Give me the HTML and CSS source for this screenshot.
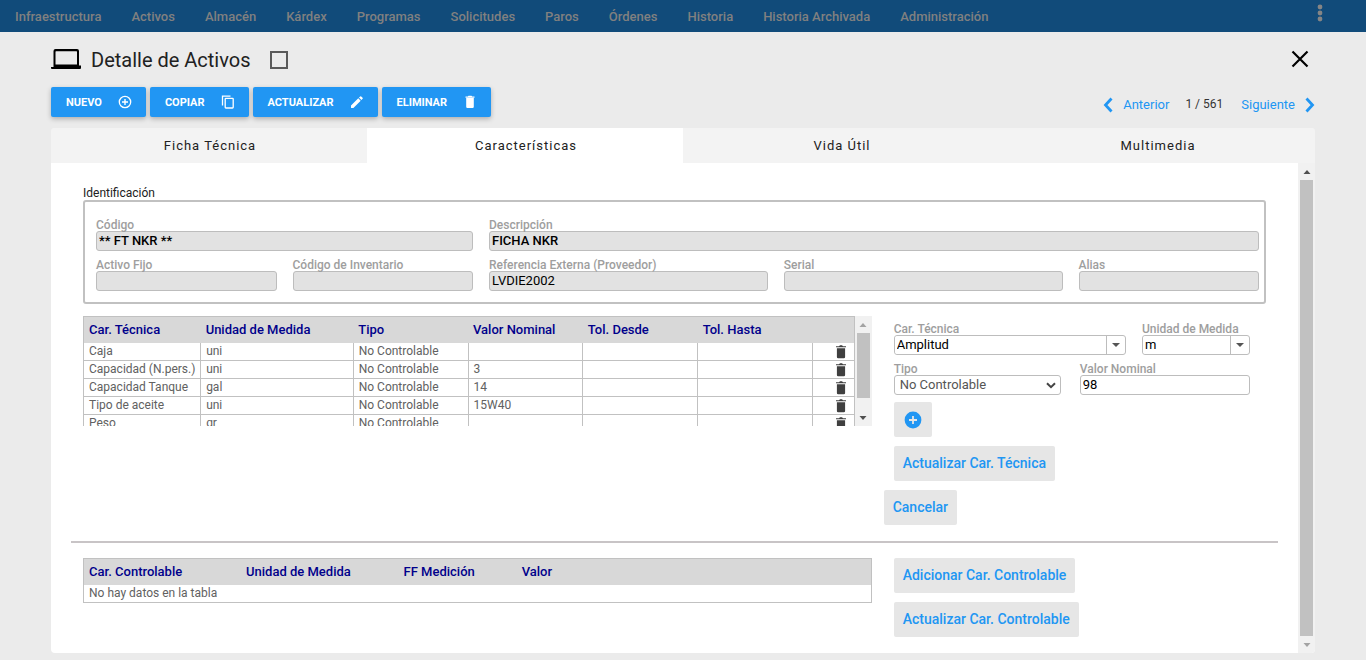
FILE: index.html
```html
<!DOCTYPE html>
<html lang="es">
<head>
<meta charset="utf-8">
<title>Detalle de Activos</title>
<link rel="stylesheet" href="styles.css">
</head>
<body>
<svg class="defs" aria-hidden="true">
  <symbol id="trash" viewBox="0 0 12 14"><path d="M1 1.2h3L5 .2h2l1 1h3v1.1H1zM1.9 3.2h8.2V12q0 1.3-1.3 1.3H3.2Q1.900 13.300 1.900 12z"/></symbol>
  <symbol id="up" viewBox="0 0 7 4"><path d="M0 4 3.500 0 7 4z"/></symbol>
  <symbol id="down" viewBox="0 0 7 4"><path d="M0 0h7L3.500 4z"/></symbol>
</svg>

<nav class="topbar">
  <div class="menu">
    <a href="#">Infraestructura</a><a href="#">Activos</a><a href="#">Almacén</a><a href="#">Kárdex</a><a href="#">Programas</a><a href="#">Solicitudes</a><a href="#">Paros</a><a href="#">Órdenes</a><a href="#">Historia</a><a href="#">Historia Archivada</a><a href="#">Administración</a>
  </div>
  <button class="more" aria-label="Más opciones">
    <svg width="6" height="18" viewBox="0 0 6 18"><circle cx="3" cy="3" r="2.400"/><circle cx="3" cy="9" r="2.400"/><circle cx="3" cy="15" r="2.400"/></svg>
  </button>
</nav>

<main class="dialog">
  <header class="title-row">
    <svg class="laptop" width="30" height="22" viewBox="0 0 30 22"><path d="M4.500 0h21.500q2 0 2 2v14.500h2V19q0 1-1 1H1q-1 0-1-1v-1h2.500V2q0-2 2-2zM5 2.200q-.5 0-.5.5V15.500H26V2.700q0-.5-.5-.5z" fill-rule="evenodd"/></svg>
    <h1>Detalle de Activos</h1>
    <input type="checkbox" class="tick" aria-label="Seleccionar activo">
    <button class="close" aria-label="Cerrar">
      <svg width="18" height="18" viewBox="0 0 18 18"><path d="M1.500 1.500l15 15M16.500 1.500l-15 15" fill="none" stroke="#000" stroke-width="2.200"/></svg>
    </button>
  </header>

  <div class="toolbar">
    <div class="actions">
      <button>NUEVO <svg viewBox="0 0 14 14"><circle cx="7" cy="7" r="5.700" fill="none" stroke="#fff" stroke-width="1.300"/><path d="M6.300 4h1.400v2.300H10v1.400H7.700V10H6.300V7.700H4V6.300h2.300z"/></svg></button>
      <button>COPIAR <svg viewBox="0 0 14 14"><path d="M1.500 10.500V1.100H9.500" fill="none" stroke="#fff" stroke-width="1.300"/><rect x="4.200" y="3.400" width="8" height="9.600" rx=".7" fill="none" stroke="#fff" stroke-width="1.300"/></svg></button>
      <button>ACTUALIZAR <svg viewBox="0 0 14 14"><path d="M1 10.600 8.300 3.300l2.400 2.400L3.400 13H1zM9 2.600l1.200-1.200q.5-.4 1 0l1.400 1.400q.5.500 0 1L11.400 5z"/></svg></button>
      <button>ELIMINAR <svg viewBox="0 0 14 14"><path d="M2.500 1.500h2.300l.7-.7h3l.7.700h2.300v1.300h-9zM3.200 3h7.600v8.800q0 1.200-1.200 1.200H4.400q-1.200 0-1.200-1.200z"/></svg></button>
    </div>
    <div class="pager">
      <button><svg width="10" height="16" viewBox="0 0 10 16"><path d="M8.500 1.500 2.500 8l6 6.500" fill="none" stroke="#2196f3" stroke-width="2.800"/></svg>Anterior</button>
      <span>1 / 561</span>
      <button>Siguiente<svg width="10" height="16" viewBox="0 0 10 16"><path d="M1.500 1.500 7.500 8l-6 6.500" fill="none" stroke="#2196f3" stroke-width="2.800"/></svg></button>
    </div>
  </div>

  <div class="tabs" role="tablist">
    <button role="tab">Ficha Técnica</button>
    <button role="tab" class="active" aria-selected="true">Características</button>
    <button role="tab">Vida Útil</button>
    <button role="tab">Multimedia</button>
  </div>

  <section class="panel">
    <div class="content">
      <div class="ident">
        <h2>Identificación</h2>
        <div class="fields">
          <div class="field w4"><label for="codigo">Código</label><input id="codigo" class="strong" value="** FT NKR **" readonly></div>
          <div class="field w8"><label for="desc">Descripción</label><input id="desc" class="strong" value="FICHA NKR" readonly></div>
          <div class="field w2"><label for="fijo">Activo Fijo</label><input id="fijo" readonly></div>
          <div class="field w2"><label for="inv">Código de Inventario</label><input id="inv" readonly></div>
          <div class="field w3"><label for="ref">Referencia Externa (Proveedor)</label><input id="ref" value="LVDIE2002" readonly></div>
          <div class="field w3"><label for="serial">Serial</label><input id="serial" readonly></div>
          <div class="field w2"><label for="alias">Alias</label><input id="alias" readonly></div>
        </div>
      </div>

      <div class="split">
        <div class="scroller">
          <table class="grid technical">
            <colgroup><col class="c-name"><col class="c-unit"><col class="c-val"><col class="c-val"><col class="c-val"><col class="c-val"><col></colgroup>
            <thead><tr><th>Car. Técnica</th><th>Unidad de Medida</th><th>Tipo</th><th>Valor Nominal</th><th>Tol. Desde</th><th>Tol. Hasta</th><th></th></tr></thead>
            <tbody>
              <tr><td>Caja</td><td>uni</td><td>No Controlable</td><td></td><td></td><td></td><td><button aria-label="Eliminar"><svg><use href="#trash"/></svg></button></td></tr>
              <tr><td>Capacidad (N.pers.)</td><td>uni</td><td>No Controlable</td><td>3</td><td></td><td></td><td><button aria-label="Eliminar"><svg><use href="#trash"/></svg></button></td></tr>
              <tr><td>Capacidad Tanque</td><td>gal</td><td>No Controlable</td><td>14</td><td></td><td></td><td><button aria-label="Eliminar"><svg><use href="#trash"/></svg></button></td></tr>
              <tr><td>Tipo de aceite</td><td>uni</td><td>No Controlable</td><td>15W40</td><td></td><td></td><td><button aria-label="Eliminar"><svg><use href="#trash"/></svg></button></td></tr>
              <tr><td>Peso</td><td>gr</td><td>No Controlable</td><td></td><td></td><td></td><td><button aria-label="Eliminar"><svg><use href="#trash"/></svg></button></td></tr>
            </tbody>
          </table>
          <div class="bar at-top">
            <i><svg><use href="#up"/></svg></i><b></b><i><svg><use href="#down"/></svg></i>
          </div>
        </div>
        <div class="side">
          <div class="pair first">
            <div class="field"><label for="car">Car. Técnica</label><div class="combo"><input id="car" value="Amplitud"><button aria-label="Abrir lista"><svg viewBox="0 0 8 4"><path d="M0 0h8L4 4z"/></svg></button></div></div>
            <div class="field"><label for="um">Unidad de Medida</label><div class="combo"><input id="um" value="m"><button aria-label="Abrir lista"><svg viewBox="0 0 8 4"><path d="M0 0h8L4 4z"/></svg></button></div></div>
          </div>
          <div class="pair second">
            <div class="field"><label for="tipo">Tipo</label><div class="select"><select id="tipo"><option>No Controlable</option></select><svg width="10" height="7" viewBox="0 0 10 7"><path d="M1 1.200l4 4 4-4" fill="none" stroke="#444" stroke-width="2"/></svg></div></div>
            <div class="field"><label for="nominal">Valor Nominal</label><input id="nominal" value="98"></div>
          </div>
          <div class="stack">
            <button class="flat add" aria-label="Adicionar"><svg width="18" height="18" viewBox="0 0 18 18"><circle cx="9" cy="9" r="8.400" fill="#2196f3"/><path d="M8.100 5h1.800v3.100H13v1.800H9.900V13H8.100V9.900H5V8.100h3.100z" fill="#e6e6e6"/></svg></button>
            <button class="flat">Actualizar Car. Técnica</button>
            <button class="flat cancel">Cancelar</button>
          </div>
        </div>
      </div>

      <hr>

      <div class="split">
        <div>
          <table class="grid control">
            <colgroup><col class="k-wide"><col class="k-wide"><col class="k-mid"><col></colgroup>
            <thead><tr><th>Car. Controlable</th><th>Unidad de Medida</th><th>FF Medición</th><th>Valor</th></tr></thead>
            <tbody><tr><td colspan="4">No hay datos en la tabla</td></tr></tbody>
          </table>
        </div>
        <div class="side">
          <div class="stack">
            <button class="flat">Adicionar Car. Controlable</button>
            <button class="flat">Actualizar Car. Controlable</button>
          </div>
        </div>
      </div>
    </div>
    <div class="bar at-end">
      <i><svg><use href="#up"/></svg></i><b></b><i><svg><use href="#down"/></svg></i>
    </div>
  </section>
</main>
</body>
</html>
```

FILE: styles.css
```css
* { box-sizing: border-box; }
body {
  margin: 0;
  min-height: 100vh;
  display: flex;
  flex-direction: column;
  background: #ebebeb;
  color: #212121;
  font-family: Roboto, "Liberation Sans", sans-serif;
  font-size: 12px;
}
button, input, select { font: inherit; margin: 0; }
button { border: 0; padding: 0; background: none; cursor: pointer; }
svg { display: block; flex: none; }
.defs { position: absolute; width: 0; height: 0; }

.topbar {
  display: flex;
  justify-content: space-between;
  height: 32px;
  padding-right: 43px;
  background: #114b7a;
}
.menu { display: flex; align-items: center; }
.menu a {
  padding: 0 15px;
  color: #808080;
  font-size: 13px;
  font-weight: 500;
  text-decoration: none;
}
.more { padding-bottom: 6px; }
.more svg { fill: #858585; }

.dialog {
  flex: 1;
  display: flex;
  flex-direction: column;
  padding: 11px 51px 7px;
}
.title-row { display: flex; align-items: center; height: 34px; }
h1 { margin: 0 20px 0 10px; font-size: 20px; font-weight: 400; color: #212121; }
.tick {
  appearance: none;
  width: 18px;
  height: 18px;
  border: 2px solid #5a5a5a;
}
.close { margin: 0 6px 0 auto; padding-bottom: 3px; }

.toolbar {
  display: flex;
  justify-content: space-between;
  align-items: center;
  margin: 10px 0 11px;
}
.actions { display: flex; gap: 4px; }
.actions button {
  display: flex;
  align-items: center;
  gap: 16px;
  height: 30px;
  padding: 0 14px 0 15px;
  border-radius: 2px;
  background: #2196f3;
  box-shadow: 0 2px 5px rgba(0, 0, 0, .26);
  color: #fff;
  font-size: 11px;
  font-weight: 700;
}
.actions svg { width: 14px; height: 14px; fill: #fff; }
.pager { display: flex; align-items: center; gap: 16px; padding-top: 5px; }
.pager button {
  display: flex;
  align-items: center;
  gap: 10px;
  color: #2196f3;
  font-size: 13px;
}
.pager span { padding: 0 2px 2px 0; color: #333; }

.tabs { display: flex; border-radius: 3px 3px 0 0; overflow: hidden; }
.tabs button {
  flex: 1;
  height: 35px;
  padding-left: 2px;
  background: #f3f3f3;
  color: #212121;
  font-size: 13px;
  letter-spacing: 1px;
}
.tabs .active { background: #fff; }

.panel {
  flex: 1;
  display: flex;
  background: #fff;
  border-radius: 0 0 4px 4px;
  overflow: hidden;
}
.content { flex: 1; min-width: 0; padding: 23px 20px 0; }
.bar { flex: none; display: flex; flex-direction: column; width: 17px; background: #f1f1f1; }
.bar i { display: flex; align-items: center; justify-content: center; height: 17px; }
.bar svg { width: 8px; height: 4px; fill: #505050; }
.bar b { flex: 1; margin: 0 2px; background: #c1c1c1; }
.at-top b { flex: none; height: 65px; margin-bottom: auto; }
.at-top i:first-child svg, .at-end i:last-child svg { fill: #a3a3a3; }

.ident { padding: 0 12px; }
h2 { margin: 0; font-size: 12px; font-weight: 400; line-height: 14px; }
.fields {
  display: grid;
  grid-template-columns: repeat(12, 1fr);
  gap: 8px 16px;
  padding: 17px 5px 11px 11px;
  border: 2px solid #c1c1c1;
  border-radius: 3px;
}
.w2 { grid-column: span 2; }
.w3 { grid-column: span 3; }
.w4 { grid-column: span 4; }
.w8 { grid-column: span 8; }
.field { min-width: 0; }
.field label {
  display: block;
  color: #9e9e9e;
  font-weight: 500;
  line-height: 12px;
}
.field input, .select select {
  display: block;
  width: 100%;
  height: 20px;
  padding: 0 2px 1px;
  border: 1px solid #bdbdbd;
  border-radius: 3px;
  background: #fff;
  color: #000;
  font-size: 13px;
}
.field input[readonly] { background: #e2e2e2; }
.field .strong { font-weight: 500; }

.split { display: grid; grid-template-columns: 2fr 1fr; padding: 0 12px; }
.scroller { display: flex; align-items: stretch; height: 110px; overflow: hidden; }
.scroller table { align-self: flex-start; }
.ident + .split { margin-top: 12px; }

.grid {
  flex: 1;
  width: 100%;
  table-layout: fixed;
  border: 1px solid #c1c1c1;
  border-collapse: collapse;
}
.grid th {
  height: 26px;
  padding: 0 5px;
  border-top: 1px solid #c1c1c1;
  background: #d8d8d8;
  color: #00008b;
  font-size: 13px;
  font-weight: 500;
  text-align: left;
}
.grid td {
  height: 18px;
  padding: 0 5px;
  border: 1px solid #c1c1c1;
  color: #616161;
  line-height: 15px;
  white-space: nowrap;
}
.grid tbody tr:first-child td { border-top: 0; }
.grid td button { display: block; margin: 1px 2px 0 auto; }
.grid td svg { width: 12px; height: 14px; fill: #3f3f3f; }
.c-name { width: 15.2%; }
.c-unit { width: 19.8%; }
.c-val { width: 14.9%; }
.k-wide { width: 20%; }
.k-mid { width: 15%; }

.side { padding: 0 16px 0 22px; }
.pair { display: grid; }
.first { grid-template-columns: 232fr 108fr; gap: 16px; padding-top: 7px; }
.second { grid-template-columns: 167fr 170fr; gap: 19px; padding: 8px 0 7px; }
.combo { display: flex; border: 1px solid #bdbdbd; border-radius: 3px; }
.combo input { flex: 1; min-width: 0; height: 18px; border: 0; }
.combo button {
  display: flex;
  align-items: center;
  justify-content: center;
  width: 19px;
  border-left: 1px solid #bdbdbd;
}
.combo svg { width: 8px; height: 4px; fill: #555; }
.select { position: relative; }
.select select { appearance: none; padding: 0 5px 1px; color: #555; }
.select svg { position: absolute; right: 5px; top: 7px; pointer-events: none; }
.stack { display: flex; flex-direction: column; align-items: flex-start; gap: 9px; }
.flat {
  height: 35px;
  padding: 0 9px 2px;
  border-radius: 2px;
  background: #e6e6e6;
  color: #2196f3;
  font-size: 14px;
  font-weight: 500;
}
.add { padding: 0 10px; }
.cancel { margin-left: -10px; }
hr { margin: 16px 0 15px; border: 0; border-top: 2px solid #c8c4c6; }
```
